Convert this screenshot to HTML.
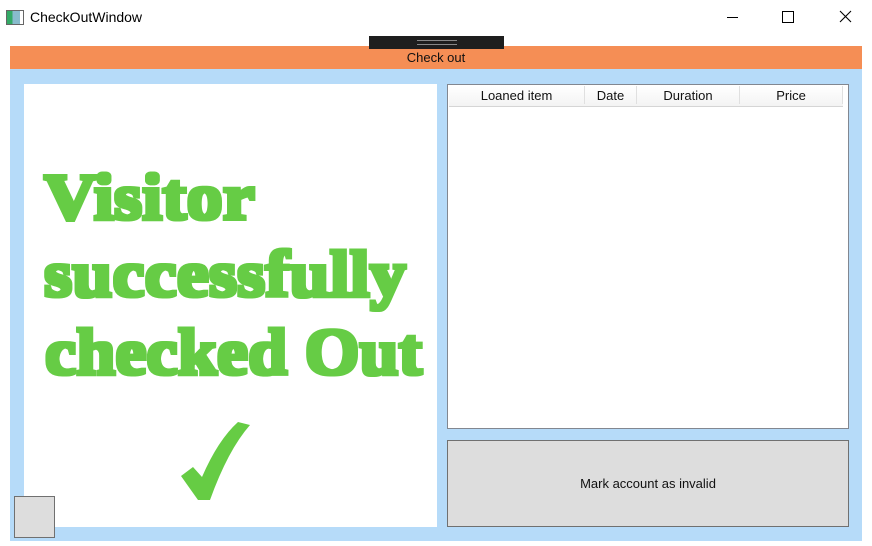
<!DOCTYPE html>
<html><head><meta charset="utf-8"><style>
body{margin:0;width:872px;height:546px;background:#fff;position:relative;overflow:hidden;font-family:"Liberation Sans",sans-serif}
.a{position:absolute}
</style></head><body>
<div class="a" style="left:6px;top:10px;width:16px;height:13px;border:1px solid #666;background:linear-gradient(90deg,#3a6 0 35%,#8bc 35% 80%,#fff 80%)"></div>
<div class="a" style="left:30px;top:9px;font-size:14px;color:#000">CheckOutWindow</div>
<div class="a" style="left:727px;top:17px;width:11px;height:1px;background:#000"></div>
<div class="a" style="left:782px;top:11px;width:10px;height:10px;border:1px solid #000"></div>
<svg class="a" style="left:839px;top:10px" width="13" height="13"><path d="M1 1L12 12M12 1L1 12" stroke="#000" stroke-width="1.1"/></svg>
<div class="a" style="left:10px;top:46px;width:852px;height:23px;background:#f58e55"></div>
<div class="a" style="left:10px;top:69px;width:852px;height:472px;background:#b6dbf9"></div>
<div class="a" style="left:369px;top:36px;width:135px;height:13px;background:#1e1e1e"></div>
<div class="a" style="left:417px;top:40px;width:40px;height:3px;border-top:1px solid #888;border-bottom:1px solid #888"></div>
<div class="a" style="left:0;width:872px;top:50px;text-align:center;font-size:13px;color:#111">Check out</div>
<div class="a" style="left:24px;top:84px;width:413px;height:443px;background:#fff"></div>
<svg class="a" style="left:0;top:0" width="872" height="546">
<defs><filter id="d" x="-5%" y="-20%" width="110%" height="140%"><feMorphology operator="dilate" radius="1.8"/></filter></defs>
<g font-family="Liberation Serif,serif" font-weight="bold" font-size="66" fill="#66cc44" filter="url(#d)">
<text x="44" y="219" textLength="211" lengthAdjust="spacingAndGlyphs">Visitor</text>
<text x="44" y="296" textLength="362" lengthAdjust="spacingAndGlyphs">successfully</text>
<text x="45" y="374" textLength="377" lengthAdjust="spacingAndGlyphs">checked Out</text>
</g>
<path d="M181 476L193 467L202 477Q218 440 238 422L250 425Q228 450 210 500L198 500Z" fill="#66cc44"/>
</svg>
<div class="a" style="left:447px;top:84px;width:400px;height:343px;background:#fff;border:1px solid #828790"></div>
<div class="a" style="left:449px;top:86px;width:394px;height:20px;background:linear-gradient(#fff,#f3f3f3);border-bottom:1px solid #d5d5d5;font-size:13px;color:#111">
<div class="a" style="left:0;width:135px;text-align:center;border-right:1px solid #e0e0e0;height:18px;top:0;line-height:19px">Loaned item</div>
<div class="a" style="left:136px;width:51px;text-align:center;border-right:1px solid #e0e0e0;height:18px;top:0;line-height:19px">Date</div>
<div class="a" style="left:188px;width:102px;text-align:center;border-right:1px solid #e0e0e0;height:18px;top:0;line-height:19px">Duration</div>
<div class="a" style="left:291px;width:102px;text-align:center;border-right:1px solid #e0e0e0;height:18px;top:0;line-height:19px">Price</div>
</div>
<div class="a" style="left:447px;top:440px;width:400px;height:85px;background:#dddddd;border:1px solid #707070;font-size:13px;color:#111;text-align:center;line-height:85px">Mark account as invalid</div>
<div class="a" style="left:14px;top:496px;width:39px;height:40px;background:#dddddd;border:1px solid #707070"></div>
</body></html>
